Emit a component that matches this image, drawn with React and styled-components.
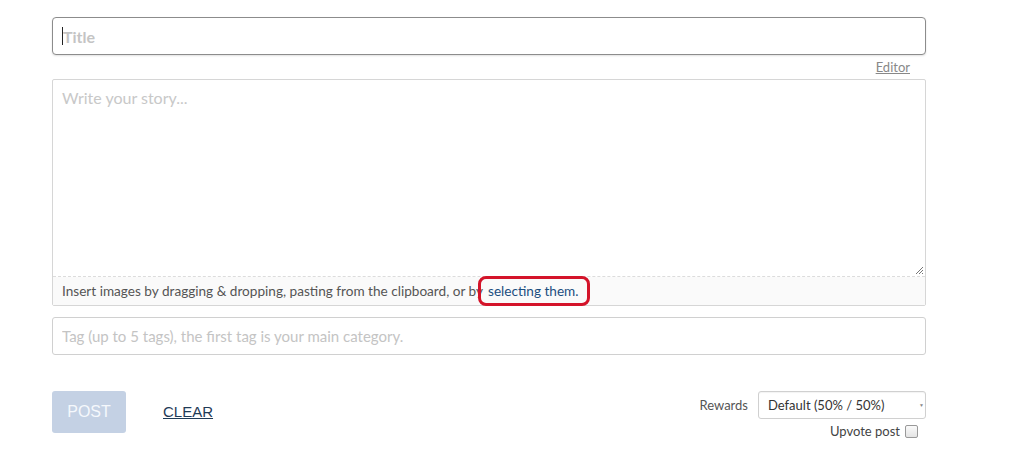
import React from "react";
import styled, { createGlobalStyle } from "styled-components";

const Global = createGlobalStyle`
  body {
    margin: 0;
    background: #fff;
    font-family: "Lato", "Open Sans", sans-serif;
  }
`;

const Page = styled.div`
  width: 874px;
  margin-left: 52px;
  padding-top: 17px;
  display: flex;
  flex-direction: column;
`;

const TitleWrap = styled.div`
  position: relative;
  &::before {
    content: "";
    position: absolute;
    left: 10px;
    top: 10px;
    width: 1px;
    height: 18px;
    background: #222;
  }
`;

const TitleInput = styled.input`
  box-sizing: border-box;
  width: 100%;
  height: 38px;
  border: 1px solid #8c8c8c;
  border-radius: 4px;
  padding: 0 10px;
  font-family: inherit;
  font-size: 16px;
  font-weight: 700;
  color: #333;
  box-shadow: 0 1px 2px rgba(0, 0, 0, 0.12);
  outline: none;
  &::placeholder {
    color: #c4c4c4;
  }
`;

const EditorRow = styled.div`
  display: flex;
  justify-content: flex-end;
  padding-right: 16px;
  height: 24px;
  align-items: center;
`;

const EditorLink = styled.a`
  font-size: 13px;
  color: #888;
  text-decoration: underline;
`;

const StoryBox = styled.div`
  border: 1px solid #d6d6d6;
  border-radius: 2px;
  display: flex;
  flex-direction: column;
`;

const StoryArea = styled.div`
  position: relative;
  height: 197px;
  border-bottom: 1px dashed #dcdcdc;
  padding: 8px 9px;
  box-sizing: border-box;
  font-size: 16px;
  color: #c8c8c8;
`;

const Grip = styled.svg`
  position: absolute;
  right: 1px;
  bottom: 1px;
`;

const DropHint = styled.div`
  height: 28px;
  background: #fafafa;
  display: flex;
  align-items: center;
  padding-left: 9px;
  font-size: 13.6px;
  color: #555;
`;

const SelectLink = styled.span`
  position: relative;
  color: #1c4e80;
  margin-left: 5px;
`;

const Annotation = styled.span`
  position: absolute;
  left: -10px;
  right: -11px;
  top: -7px;
  bottom: -7px;
  border: 3px solid #d4142a;
  border-radius: 8px;
`;

const TagInput = styled.input`
  box-sizing: border-box;
  width: 100%;
  height: 38px;
  margin-top: 11px;
  border: 1px solid #d0d0d0;
  border-radius: 3px;
  padding: 0 9px;
  font-family: inherit;
  font-size: 15px;
  outline: none;
  &::placeholder {
    color: #c4c4c4;
  }
`;

const Actions = styled.div`
  margin-top: 36px;
  display: flex;
  align-items: flex-start;
`;

const PostButton = styled.button`
  width: 74px;
  height: 42px;
  border: none;
  border-radius: 3px;
  background: #c4d1e4;
  color: #f5f8fc;
  font-family: "Liberation Sans", Arial, sans-serif;
  font-size: 16px;
`;

const ClearLink = styled.a`
  margin-left: 37px;
  margin-top: 12px;
  font-family: "Liberation Sans", Arial, sans-serif;
  font-size: 15px;
  color: #1f3b57;
  text-decoration: underline;
`;

const Rewards = styled.div`
  margin-left: auto;
  display: flex;
  flex-direction: column;
  align-items: flex-end;
`;

const RewardRow = styled.div`
  display: flex;
  align-items: center;
  gap: 10px;
  font-size: 13px;
  color: #555;
`;

const Select = styled.div`
  box-sizing: border-box;
  width: 168px;
  height: 28px;
  border: 1px solid #d0d0d0;
  border-radius: 3px;
  display: flex;
  align-items: center;
  justify-content: space-between;
  padding: 0 1px 0 9px;
  font-size: 13px;
  color: #333;
  box-shadow: inset 0 1px 1px rgba(0, 0, 0, 0.05);
`;

const Caret = styled.span`
  font-size: 5px;
  color: #888;
`;

const Upvote = styled.label`
  margin-top: 4px;
  margin-right: 8px;
  display: flex;
  align-items: center;
  gap: 5px;
  font-size: 13px;
  color: #444;
`;

const Check = styled.span`
  width: 11px;
  height: 11px;
  border: 1px solid #999;
  border-radius: 2px;
  background: linear-gradient(#fafafa, #e4e4e4);
`;

export default function App() {
  return (
    <>
      <Global />
      <Page>
        <TitleWrap>
          <TitleInput placeholder="Title" />
        </TitleWrap>
        <EditorRow>
          <EditorLink>Editor</EditorLink>
        </EditorRow>
        <StoryBox>
          <StoryArea>
            Write your story...
            <Grip width="10" height="10" viewBox="0 0 10 10">
              <path d="M9 2 L2 9 M9 5 L5 9 M9 8 L8 9" stroke="#777" strokeWidth="1" />
            </Grip>
          </StoryArea>
          <DropHint>
            Insert images by dragging &amp; dropping, pasting from the clipboard, or by
            <SelectLink>
              selecting them.
              <Annotation />
            </SelectLink>
          </DropHint>
        </StoryBox>
        <TagInput placeholder="Tag (up to 5 tags), the first tag is your main category." />
        <Actions>
          <PostButton>POST</PostButton>
          <ClearLink>CLEAR</ClearLink>
          <Rewards>
            <RewardRow>
              Rewards
              <Select>
                Default (50% / 50%)
                <Caret>▼</Caret>
              </Select>
            </RewardRow>
            <Upvote>
              Upvote post
              <Check />
            </Upvote>
          </Rewards>
        </Actions>
      </Page>
    </>
  );
}
